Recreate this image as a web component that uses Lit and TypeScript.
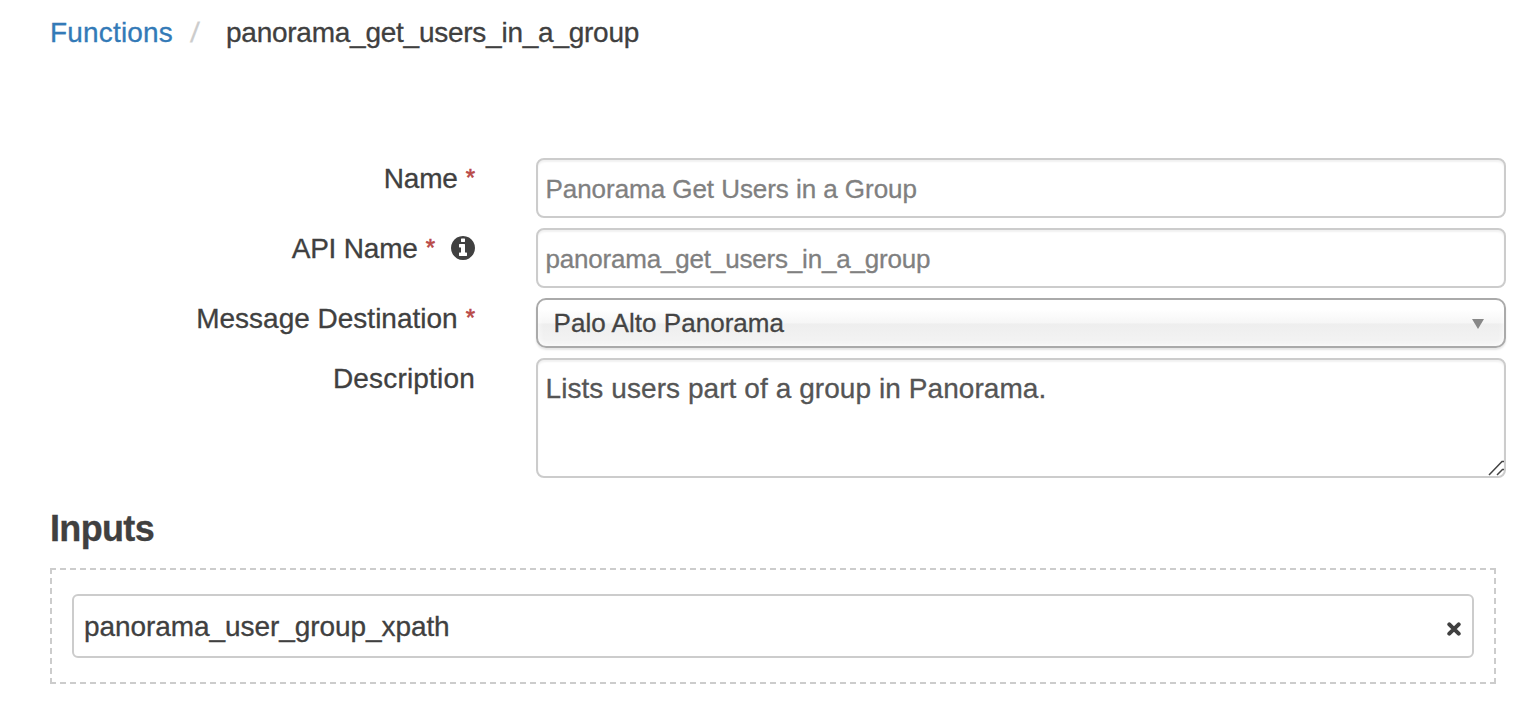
import { LitElement, html, css, svg } from "lit";
import { customElement } from "lit/decorators.js";

const infoIcon = html`<svg class="info" viewBox="0 128 1536 1536" aria-hidden="true">${svg`<path d="M1024 1376v-160q0-14-9-23t-23-9h-96v-512q0-14-9-23t-23-9h-320q-14 0-23 9t-9 23v160q0 14 9 23t23 9h96v320h-96q-14 0-23 9t-9 23v160q0 14 9 23t23 9h448q14 0 23-9t9-23zm-128-896v-160q0-14-9-23t-23-9h-192q-14 0-23 9t-9 23v160q0 14 9 23t23 9h192q14 0 23-9t9-23zm640 416q0 209-103 385.5t-279.5 279.5-385.5 103-385.5-103-279.5-279.5-103-385.5 103-385.5 279.5-279.5 385.5-103 385.5 103 279.5 279.5 103 385.5z"/>`}</svg>`;

const removeIcon = html`<svg class="remove" viewBox="0 0 14 14" aria-hidden="true">${svg`<path d="M2.3 2.3L11.7 11.7M11.7 2.3L2.3 11.7"/>`}</svg>`;

@customElement("app-root")
class AppRoot extends LitElement {
  static styles = css`
    :host {
      display: block;
      box-sizing: border-box;
      height: 716px;
      overflow: hidden;
      padding: 13px 30px 0 50px;
      background: #fff;
      color: #404040;
      font: 28px/40px "Liberation Sans", Arial, sans-serif;
      white-space: nowrap;
      -webkit-text-stroke: 0.3px currentColor;
    }
    * { box-sizing: border-box; }
    .crumbs { display: flex; height: 40px; }
    .link { color: #337ab7; width: 141px; letter-spacing: 0.17px; }
    .slash { width: 35px; color: #ccc; }
    .slash span { display: inline-block; transform: skewX(-6deg); }
    .current { letter-spacing: -0.25px; }
    .form {
      display: grid;
      grid-template-columns: 425px 970px;
      column-gap: 61px;
      row-gap: 10px;
      margin-top: 105px;
    }
    .label { display: flex; justify-content: flex-end; height: 40px; padding-top: 1px; }
    .l1, .l2 { letter-spacing: -0.2px; }
    .l4 { letter-spacing: 0.18px; }
    .star {
      color: #b94a48;
      margin-left: 8px;
      font-size: 24px;
      line-height: 38px;
      -webkit-text-stroke-width: 0.6px;
    }
    .info { width: 24px; height: 24px; margin: 7px 0 0 16px; fill: #404040; }
    .field {
      border: 2px solid #ccc;
      border-radius: 8px;
      padding-left: 7.5px;
      box-shadow: inset 0 2px 2px rgba(0, 0, 0, 0.06);
    }
    .text { height: 60px; line-height: 58px; font-size: 26px; color: #808080; }
    .v1 { letter-spacing: -0.05px; }
    .v2 { letter-spacing: -0.19px; }
    .v3 { letter-spacing: 0.04px; }
    .select {
      display: flex;
      align-items: center;
      justify-content: space-between;
      height: 50px;
      padding: 0 20px 0 15.5px;
      border: 2px solid #aaa;
      border-radius: 10px;
      font-size: 26px;
      line-height: 46px;
      color: #444;
      background: linear-gradient(#fff 20%, #f6f6f6 50%, #eee 52%, #f4f4f4 100%) padding-box;
      box-shadow: inset 0 0 6px #fff, 0 2px 2px rgba(0, 0, 0, 0.1);
    }
    .arrow { width: 12px; height: 10px; fill: #888; margin-top: 1px; }
    .area {
      display: flex;
      justify-content: space-between;
      height: 120px;
      padding-top: 9px;
      color: #555;
    }
    .v4 { letter-spacing: 0.07px; }
    .grip { width: 16px; height: 16px; align-self: flex-end; stroke: #444; stroke-width: 1.5; fill: none; }
    .title {
      margin: 29px 0 0;
      height: 42px;
      font-size: 36px;
      line-height: 43px;
      font-weight: 700;
      letter-spacing: -0.65px;
    }
    .drop { width: 1446px; height: 116px; margin-top: 19px; padding: 24px 20px; border: 2px dashed #ccc; }
    .item {
      display: flex;
      align-items: center;
      justify-content: space-between;
      height: 64px;
      padding: 0 11px 0 10px;
      border: 2px solid #ccc;
      border-radius: 6px;
    }
    .v5 { letter-spacing: -0.07px; padding-top: 2px; }
    .remove {
      width: 14px;
      height: 14px;
      margin-top: 5px;
      stroke: #404040;
      stroke-width: 4;
      stroke-linecap: round;
    }
  `;

  render() {
    return html`
      <nav class="crumbs">
        <span class="link">Functions</span>
        <span class="slash"><span>/</span></span>
        <span class="current">panorama_get_users_in_a_group</span>
      </nav>
      <div class="form">
        <div class="label"><span class="l1">Name</span><span class="star">*</span></div>
        <div class="field text"><span class="v1">Panorama Get Users in a Group</span></div>
        <div class="label"><span class="l2">API Name</span><span class="star">*</span>${infoIcon}</div>
        <div class="field text"><span class="v2">panorama_get_users_in_a_group</span></div>
        <div class="label"><span class="l3">Message Destination</span><span class="star">*</span></div>
        <div class="select">
          <span class="v3">Palo Alto Panorama</span>
          <svg class="arrow" viewBox="0 0 12 10"><path d="M0 0H12L6 10z" /></svg>
        </div>
        <div class="label"><span class="l4">Description</span></div>
        <div class="field area">
          <span class="v4">Lists users part of a group in Panorama.</span>
          <svg class="grip" viewBox="0 0 16 16"><path d="M1 15L14 1.5H16M9 15L14.5 9.5H16" /></svg>
        </div>
      </div>
      <h2 class="title">Inputs</h2>
      <div class="drop">
        <div class="item"><span class="v5">panorama_user_group_xpath</span>${removeIcon}</div>
      </div>
    `;
  }
}
